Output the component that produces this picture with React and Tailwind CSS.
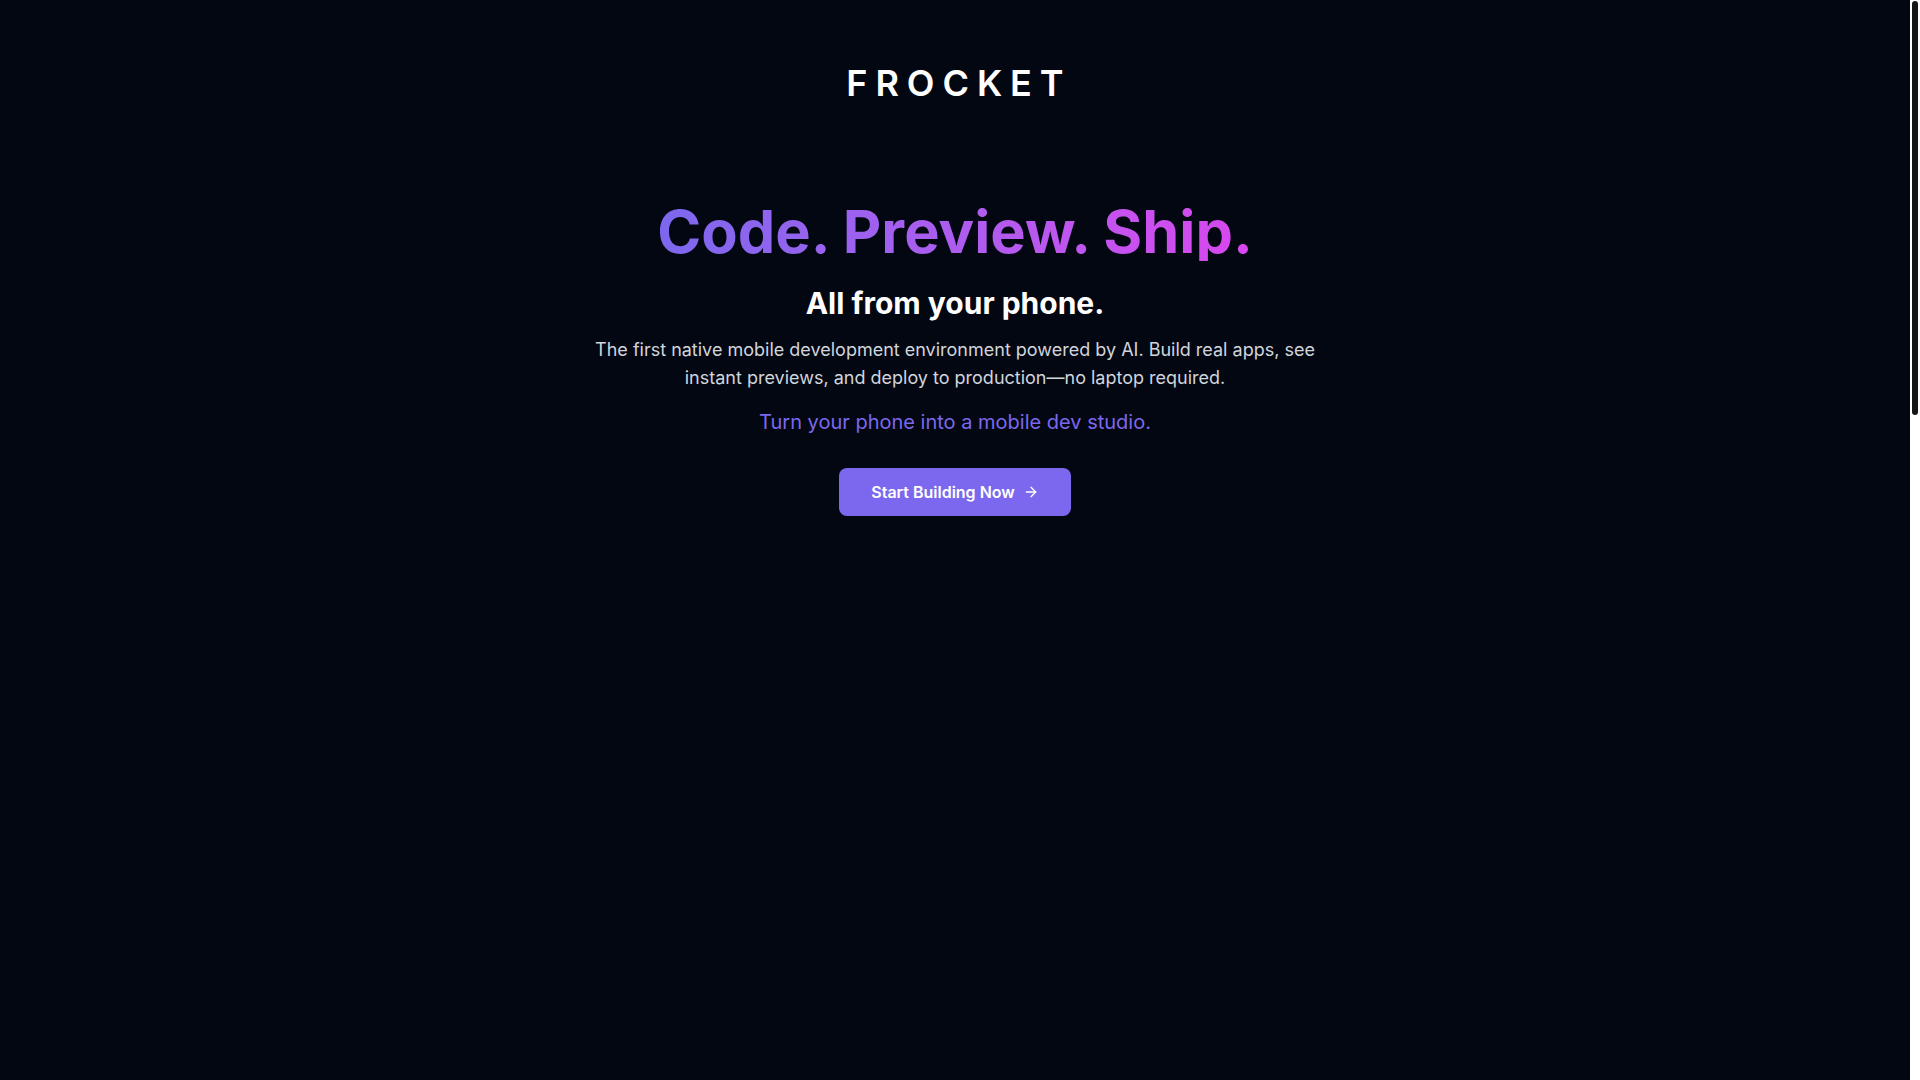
import React from "react";
import { ArrowRight } from "lucide-react";

export default function App() {
  return (
    <div
      className="flex h-screen w-full bg-[#030712] text-white"
      style={{ fontFamily: "Inter, 'Noto Sans', sans-serif" }}
    >
      <main className="h-screen flex-1 overflow-y-auto">
        <div className="flex min-h-[2824px] flex-col items-center">
          <header className="flex w-full justify-center pt-[63px]">
            <div className="pl-[0.22em] text-4xl font-semibold tracking-[0.22em] text-white">
              FROCKET
            </div>
          </header>

          <section className="mt-[98px] flex w-full flex-col items-center px-6 text-center">
            <h1 className="bg-gradient-to-r from-[#7b68ee] to-[#d946ef] bg-clip-text text-[59.5px] font-bold leading-[60px] text-transparent">
              Code. Preview. Ship.
            </h1>
            <h2 className="mt-6 text-3xl font-bold text-white">
              All from your phone.
            </h2>
            <p className="mt-[15px] max-w-3xl text-lg leading-7 text-gray-300">
              The first native mobile development environment powered by AI.
              Build real apps, see instant previews, and deploy to
              production—no laptop required.
            </p>
            <p className="mt-4 text-xl leading-7 text-[#7b68ee]">
              Turn your phone into a mobile dev studio.
            </p>
            <button className="mt-8 flex h-[48px] items-center rounded-lg bg-[#7b68ee] px-8 text-base font-semibold text-white">
              Start Building Now
              <ArrowRight className="ml-2 h-4 w-4" strokeWidth={2} />
            </button>
          </section>
        </div>
      </main>

      <div className="flex h-screen w-[10px] shrink-0 flex-col bg-white" aria-hidden="true">
        <div className="ml-[2px] mt-[1px] h-[414px] w-[6px] rounded-full bg-[#161616]" />
      </div>
    </div>
  );
}
